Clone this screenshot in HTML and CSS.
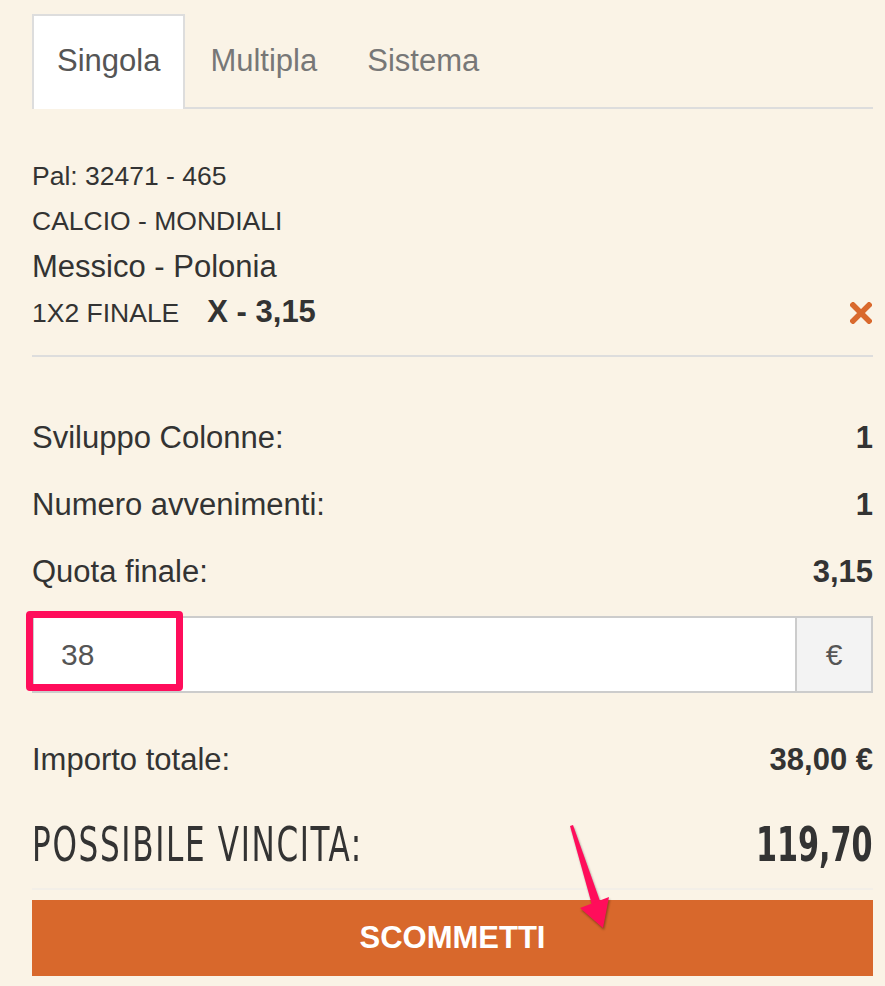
FILE: index.html
```html
<!DOCTYPE html>
<html lang="it">
<head>
<meta charset="UTF-8">
<title>Schedina</title>
<link rel="stylesheet" href="styles.css">
</head>
<body>
<div class="slip">
  <ul class="tabs">
    <li class="tab active">Singola</li>
    <li class="tab">Multipla</li>
    <li class="tab">Sistema</li>
  </ul>

  <div class="event">
    <div class="small">Pal: 32471 - 465</div>
    <div class="small">CALCIO - MONDIALI</div>
    <div class="match">Messico - Polonia</div>
    <div class="bet">
      <span class="small">1X2 FINALE</span>
      <b class="pick">X - 3,15</b>
      <svg class="remove" width="22" height="22" viewBox="0 0 22 22">
        <path d="M3 3 L19 19 M19 3 L3 19" stroke="#d9692d" stroke-width="5.5" stroke-linecap="square"/>
      </svg>
    </div>
  </div>

  <div class="row"><span>Sviluppo Colonne:</span><b>1</b></div>
  <div class="row"><span>Numero avvenimenti:</span><b>1</b></div>
  <div class="row"><span>Quota finale:</span><b>3,15</b></div>

  <div class="stake">
    <div class="stake-input">38</div>
    <div class="stake-addon">€</div>
    <div class="mark"></div>
  </div>

  <div class="row total"><span>Importo totale:</span><b>38,00 €</b></div>

  <div class="win">
    <span class="win-label">POSSIBILE VINCITA:</span>
    <b class="win-value">119,70</b>
  </div>

  <button class="bet-btn">SCOMMETTI</button>

  <svg class="arrow" width="885" height="986" viewBox="0 0 885 986">
    <g fill="#ff0d5b" style="filter: drop-shadow(1px 2px 1px rgba(0,0,0,0.35))">
      <polygon points="570,826 573,825 600,901 592,905"/>
      <polygon points="580,908 609,897 603,928"/>
    </g>
  </svg>
</div>
</body>
</html>
```

FILE: styles.css
```css
body {
  margin: 0;
  background: #faf3e6;
  font-family: "Liberation Sans", Arial, sans-serif;
  color: #333;
}
.slip {
  position: relative;
  padding: 14px 12px 0 32px;
  height: 972px;
}
.tabs {
  list-style: none;
  margin: 0;
  padding: 0;
  display: flex;
  border-bottom: 2px solid #ddd;
}
.tab {
  height: 91px;
  line-height: 89px;
  padding: 0 23px;
  font-size: 31px;
  color: #777;
  border: 2px solid transparent;
  border-bottom: 0;
  margin-bottom: -2px;
}
.tab.active {
  background: #fff;
  color: #555;
  border-color: #ddd;
  height: 93px;
}
.event {
  padding-top: 45px;
  padding-bottom: 19px;
  border-bottom: 2px solid #ddd;
}
.small {
  font-size: 26.5px;
  line-height: 45px;
}
.match {
  font-size: 31px;
  line-height: 45px;
}
.bet {
  display: flex;
  align-items: baseline;
  line-height: 45px;
}
.pick {
  font-size: 31px;
  margin-left: 28px;
}
.remove {
  margin-left: auto;
  margin-right: 1px;
  align-self: center;
}
.event + .row {
  margin-top: 47px;
}
.row {
  display: flex;
  justify-content: space-between;
  font-size: 31px;
  line-height: 67px;
}
.stake {
  position: relative;
  display: flex;
  margin-top: 11px;
  height: 73px;
  border: 2px solid #ccc;
  background: #fff;
}
.stake-input {
  flex: 1;
  padding-left: 27px;
  font-size: 30px;
  line-height: 73px;
  color: #555;
}
.stake-addon {
  width: 74px;
  border-left: 2px solid #ccc;
  background: #f3f3f3;
  text-align: center;
  font-size: 30px;
  line-height: 73px;
  color: #555;
}
.mark {
  position: absolute;
  left: -8px;
  top: -7px;
  width: 143px;
  height: 66px;
  border: 7px solid #ff0d5b;
  border-radius: 4px;
}
.total {
  margin-top: 33px;
}
.win {
  display: flex;
  justify-content: space-between;
  align-items: baseline;
  font-family: "DejaVu Sans Condensed", "DejaVu Sans", sans-serif;
  font-size: 48px;
  line-height: 88px;
  padding-top: 7px;
  border-bottom: 2px solid #f3efe8;
}
.win-label {
  letter-spacing: 2.3px;
  transform: scaleX(0.72);
  transform-origin: left center;
}
.win-value {
  transform: scaleX(0.7);
  transform-origin: right center;
}
.bet-btn {
  display: block;
  width: 100%;
  margin-top: 10px;
  height: 76px;
  border: none;
  background: #d8682c;
  color: #fff;
  font-family: "Liberation Sans", Arial, sans-serif;
  font-weight: bold;
  font-size: 31px;
}
.arrow {
  position: absolute;
  left: 0;
  top: 0;
  pointer-events: none;
}
```
